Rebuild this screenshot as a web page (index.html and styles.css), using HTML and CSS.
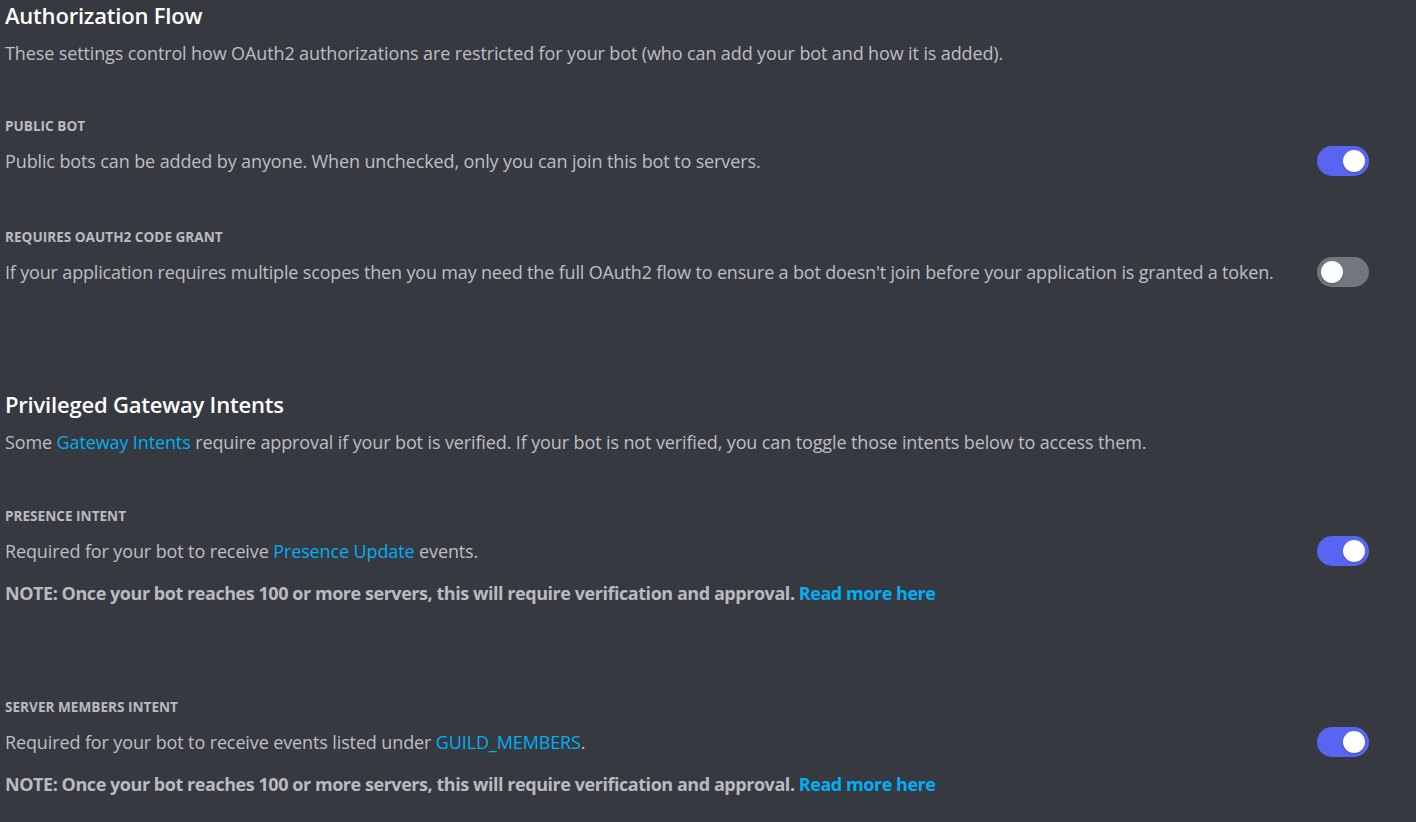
FILE: index.html
```html
<!DOCTYPE html>
<html>
<head>
<meta charset="utf-8">
<link rel="stylesheet" href="styles.css">
</head>
<body>
<div class="page">
  <section class="section">
    <h2 class="title">Authorization Flow</h2>
    <p class="lead">These settings control how OAuth2 authorizations are restricted for your bot (who can add your bot and how it is added).</p>
    <div class="setting first">
      <div class="label">PUBLIC BOT</div>
      <div class="row">
        <div class="desc">Public bots can be added by anyone. When unchecked, only you can join this bot to servers.</div>
        <div class="toggle on"><span class="knob"></span></div>
      </div>
    </div>
    <div class="setting">
      <div class="label">REQUIRES OAUTH2 CODE GRANT</div>
      <div class="row">
        <div class="desc tight">If your application requires multiple scopes then you may need the full OAuth2 flow to ensure a bot doesn't join before your application is granted a token.</div>
        <div class="toggle"><span class="knob"></span></div>
      </div>
    </div>
  </section>
  <section class="section second">
    <h2 class="title">Privileged Gateway Intents</h2>
    <p class="lead">Some <a class="link">Gateway Intents</a> require approval if your bot is verified. If your bot is not verified, you can toggle those intents below to access them.</p>
    <div class="setting first">
      <div class="label">PRESENCE INTENT</div>
      <div class="row">
        <div class="desc">Required for your bot to receive <a class="link">Presence Update</a> events.</div>
        <div class="toggle on"><span class="knob"></span></div>
      </div>
      <div class="note">NOTE: Once your bot reaches 100 or more servers, this will require verification and approval. <a class="link">Read more here</a></div>
    </div>
    <div class="setting big">
      <div class="label">SERVER MEMBERS INTENT</div>
      <div class="row">
        <div class="desc">Required for your bot to receive events listed under <a class="link">GUILD_MEMBERS</a>.</div>
        <div class="toggle on"><span class="knob"></span></div>
      </div>
      <div class="note">NOTE: Once your bot reaches 100 or more servers, this will require verification and approval. <a class="link">Read more here</a></div>
    </div>
  </section>
</div>
</body>
</html>
```
FILE: styles.css
```css
html, body {
  margin: 0;
  padding: 0;
  background: #36393f;
  height: 100%;
  overflow: hidden;
}
body {
  font-family: "Open Sans", "Noto Sans", sans-serif;
  color: #b9bbbe;
}
.page {
  padding: 0 47px 0 5px;
}
.title {
  margin: 0;
  font-size: 22px;
  font-weight: 600;
  color: #ffffff;
  line-height: 30px;
  letter-spacing: -0.2px;
}
.lead {
  margin: 8px 0 0;
  font-size: 18px;
  line-height: 30px;
  color: #bdbfc2;
  letter-spacing: -0.12px;
}
.setting.first { margin-top: 48px; }
.second .setting.first { margin-top: 49px; }
.setting { margin-top: 51px; }
.setting.big { margin-top: 89px; }
.second { margin-top: 102px; }
.label {
  font-size: 13.6px;
  font-weight: 700;
  color: #b9bbbe;
  line-height: 20px;
  letter-spacing: 0;
}
.row {
  display: flex;
  align-items: center;
  justify-content: space-between;
  margin-top: 10px;
}
.desc {
  font-size: 18px;
  line-height: 30px;
  color: #bdbfc2;
  letter-spacing: -0.12px;
}
.desc.tight { letter-spacing: -0.17px; }
.note {
  margin-top: 12px;
  font-size: 18px;
  line-height: 30px;
  font-weight: 700;
  color: #b9bbbe;
  letter-spacing: -0.45px;
}
.link {
  color: #00aff4;
  cursor: pointer;
}
.toggle {
  flex: none;
  width: 52px;
  height: 30px;
  border-radius: 15px;
  background: #72767d;
  position: relative;
  box-sizing: border-box;
}
.toggle.on { background: #5865f2; }
.knob {
  position: absolute;
  top: 4px;
  left: 4px;
  width: 22px;
  height: 22px;
  border-radius: 50%;
  background: #ffffff;
  box-shadow: 0 1px 2px rgba(0,0,0,0.25);
}
.toggle.on .knob { left: 26px; }
```
